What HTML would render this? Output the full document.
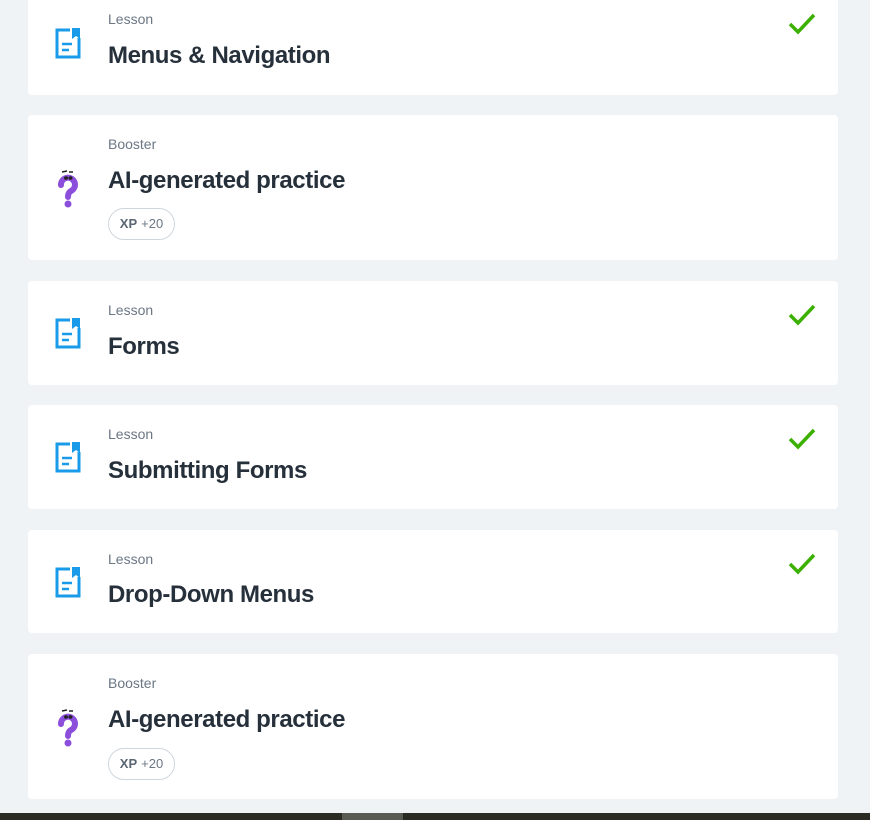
<!DOCTYPE html>
<html><head><style>
body{margin:0;width:870px;height:820px;background:#f0f3f6;position:relative;overflow:hidden;font-family:"Liberation Sans",sans-serif}
.c{position:absolute;left:28px;width:810px;background:#fff;border-radius:4px}
.lb{position:absolute;left:80px;font-size:14px;color:#6b7785;line-height:16px}
.t{position:absolute;left:80px;font-size:24px;font-weight:bold;color:#26303b;line-height:28px;letter-spacing:-0.4px}
.ic{position:absolute;left:26px}
.ck{position:absolute;left:760px}
.xp{position:absolute;left:80px;width:65px;height:30px;border:1px solid #cfd6dd;border-radius:16px;font-size:13px;color:#6b7785;line-height:30px;text-align:center}
.xp b{color:#5a6673;margin-right:4px}
</style></head><body>
<div class="c" style="top:-10px;height:105px">
 <svg class="ic" style="top:37px" width="28" height="32" viewBox="0 0 28 32"><path d="M16 3H3v27h22V11" fill="none" stroke="#1a9bea" stroke-width="3"/><path d="M18 1h8v11l-4-3-4 3z" fill="#1a9bea"/><path d="M8 17h10M8 23h7" stroke="#1a9bea" stroke-width="2.5"/></svg>
 <div class="lb" style="top:21px">Lesson</div><div class="t" style="top:52px">Menus &amp; Navigation</div>
 <svg class="ck" style="top:22px" width="28" height="24" viewBox="0 0 28 24"><path d="M2 12l8 8L26 3" fill="none" stroke="#3cb000" stroke-width="3.5"/></svg>
</div>
<div class="c" style="top:115px;height:145px">
 <svg class="ic" style="top:54px;left:26px" width="28" height="40" viewBox="0 0 28 40"><path d="M7 16a7 7 0 1 1 10 6c-2 1-3 3-3 6" fill="none" stroke="#8c4fdc" stroke-width="6" stroke-linecap="round"/><circle cx="14" cy="35" r="3.5" fill="#8c4fdc"/><path d="M8 3l5-1M15 3h4" stroke="#222" stroke-width="1.6"/><ellipse cx="12" cy="9" rx="2" ry="1.8" fill="#222"/><ellipse cx="16.5" cy="9" rx="2" ry="1.8" fill="#222"/></svg>
 <div class="lb" style="top:21px">Booster</div><div class="t" style="top:52px">AI-generated practice</div>
 <div class="xp" style="top:93px"><b>XP</b>+20</div>
</div>
<div class="c" style="top:281px;height:104px">
 <svg class="ic" style="top:36px" width="28" height="32" viewBox="0 0 28 32"><path d="M16 3H3v27h22V11" fill="none" stroke="#1a9bea" stroke-width="3"/><path d="M18 1h8v11l-4-3-4 3z" fill="#1a9bea"/><path d="M8 17h10M8 23h7" stroke="#1a9bea" stroke-width="2.5"/></svg>
 <div class="lb" style="top:21px">Lesson</div><div class="t" style="top:52px">Forms</div>
 <svg class="ck" style="top:22px" width="28" height="24" viewBox="0 0 28 24"><path d="M2 12l8 8L26 3" fill="none" stroke="#3cb000" stroke-width="3.5"/></svg>
</div>
<div class="c" style="top:405px;height:104px">
 <svg class="ic" style="top:36px" width="28" height="32" viewBox="0 0 28 32"><path d="M16 3H3v27h22V11" fill="none" stroke="#1a9bea" stroke-width="3"/><path d="M18 1h8v11l-4-3-4 3z" fill="#1a9bea"/><path d="M8 17h10M8 23h7" stroke="#1a9bea" stroke-width="2.5"/></svg>
 <div class="lb" style="top:21px">Lesson</div><div class="t" style="top:52px">Submitting Forms</div>
 <svg class="ck" style="top:22px" width="28" height="24" viewBox="0 0 28 24"><path d="M2 12l8 8L26 3" fill="none" stroke="#3cb000" stroke-width="3.5"/></svg>
</div>
<div class="c" style="top:530px;height:103px">
 <svg class="ic" style="top:36px" width="28" height="32" viewBox="0 0 28 32"><path d="M16 3H3v27h22V11" fill="none" stroke="#1a9bea" stroke-width="3"/><path d="M18 1h8v11l-4-3-4 3z" fill="#1a9bea"/><path d="M8 17h10M8 23h7" stroke="#1a9bea" stroke-width="2.5"/></svg>
 <div class="lb" style="top:21px">Lesson</div><div class="t" style="top:51px">Drop-Down Menus</div>
 <svg class="ck" style="top:22px" width="28" height="24" viewBox="0 0 28 24"><path d="M2 12l8 8L26 3" fill="none" stroke="#3cb000" stroke-width="3.5"/></svg>
</div>
<div class="c" style="top:654px;height:145px">
 <svg class="ic" style="top:54px;left:26px" width="28" height="40" viewBox="0 0 28 40"><path d="M7 16a7 7 0 1 1 10 6c-2 1-3 3-3 6" fill="none" stroke="#8c4fdc" stroke-width="6" stroke-linecap="round"/><circle cx="14" cy="35" r="3.5" fill="#8c4fdc"/><path d="M8 3l5-1M15 3h4" stroke="#222" stroke-width="1.6"/><ellipse cx="12" cy="9" rx="2" ry="1.8" fill="#222"/><ellipse cx="16.5" cy="9" rx="2" ry="1.8" fill="#222"/></svg>
 <div class="lb" style="top:21px">Booster</div><div class="t" style="top:52px">AI-generated practice</div>
 <div class="xp" style="top:94px"><b>XP</b>+20</div>
</div>
<div style="position:absolute;left:0;top:813px;width:870px;height:7px;background:#2c2a25"></div>
<div style="position:absolute;left:342px;top:813px;width:61px;height:7px;background:#5a5a55"></div>
</body></html>
